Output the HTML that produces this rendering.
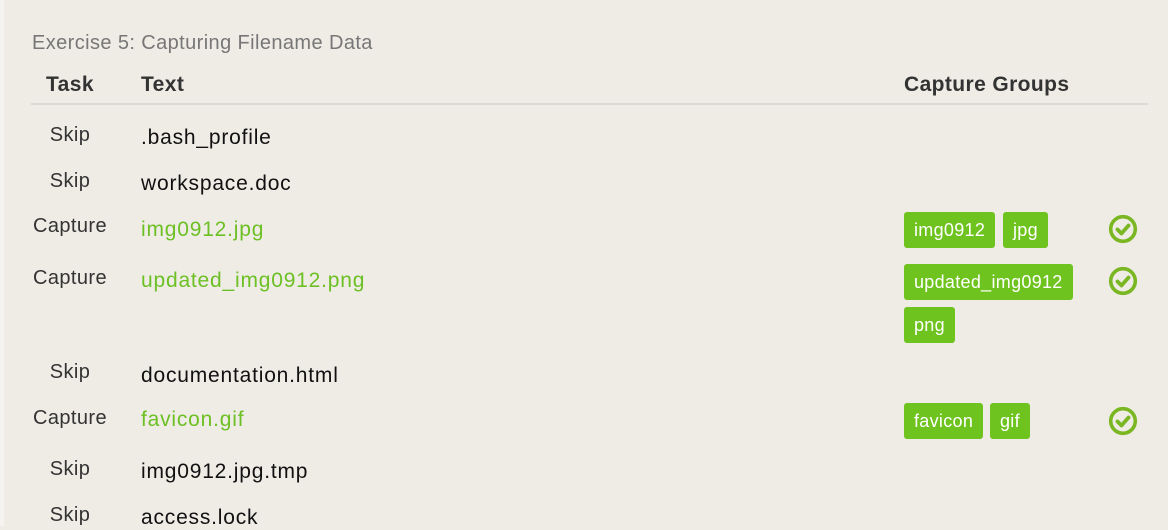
<!DOCTYPE html><html><head><style>
body{margin:0;width:1168px;height:526px;background:#efece6;font-family:"Liberation Sans",sans-serif;position:relative;overflow:hidden}
div,span{position:absolute;white-space:nowrap}
.t{font-size:21px;letter-spacing:0.8px;color:#111;line-height:24px;margin-top:2px}
.l{font-size:20px;letter-spacing:0.4px;color:#333;line-height:24px;width:100px;text-align:center;left:20px;margin-top:1px}
.g{color:#6cc024}
.h{font-weight:bold;font-size:21px;letter-spacing:0.4px;color:#333;line-height:24px;margin-top:1px}
.tag{background:#6fc31f;color:#fff;font-size:18px;letter-spacing:0.3px;height:36px;line-height:37px;border-radius:3px;padding:0 10px}
svg{position:absolute}
</style></head><body>
<div style="left:0;top:0;width:4px;height:526px;background:#f5f3ef"></div>
<div style="left:32px;top:31px;font-size:20px;letter-spacing:0.4px;color:#777;line-height:24px">Exercise 5: Capturing Filename Data</div>
<div class="h" style="left:46px;top:72px">Task</div>
<div class="h" style="left:141px;top:72px">Text</div>
<div class="h" style="left:904px;top:72px">Capture Groups</div>
<div style="left:31px;top:103px;width:1117px;height:2px;background:#dcdad6"></div>

<div class="l" style="top:122px">Skip</div><div class="t" style="left:141px;top:124px">.bash_profile</div>
<div class="l" style="top:168px">Skip</div><div class="t" style="left:141px;top:170px">workspace.doc</div>
<div class="l" style="top:213px">Capture</div><div class="t g" style="left:141px;top:216px">img0912.jpg</div>
<div class="l" style="top:265px">Capture</div><div class="t g" style="left:141px;top:267px">updated_img0912.png</div>
<div class="l" style="top:359px">Skip</div><div class="t" style="left:141px;top:362px">documentation.html</div>
<div class="l" style="top:405px">Capture</div><div class="t g" style="left:141px;top:406px">favicon.gif</div>
<div class="l" style="top:456px">Skip</div><div class="t" style="left:141px;top:458px">img0912.jpg.tmp</div>
<div class="l" style="top:502px">Skip</div><div class="t" style="left:141px;top:504px">access.lock</div>

<div class="tag" style="left:904px;top:212px">img0912</div>
<div class="tag" style="left:1003px;top:212px">jpg</div>
<div class="tag" style="left:904px;top:264px">updated_img0912</div>
<div class="tag" style="left:904px;top:307px">png</div>
<div class="tag" style="left:904px;top:403px">favicon</div>
<div class="tag" style="left:990px;top:403px">gif</div>

<svg style="left:1108px;top:214px" width="30" height="30" viewBox="0 0 30 30"><circle cx="15" cy="15" r="12.3" fill="none" stroke="#7ab723" stroke-width="3.6"/><path d="M9.5 15.5l4 4 7-8" fill="none" stroke="#7ab723" stroke-width="3.8" stroke-linecap="round" stroke-linejoin="round"/></svg>
<svg style="left:1108px;top:266px" width="30" height="30" viewBox="0 0 30 30"><circle cx="15" cy="15" r="12.3" fill="none" stroke="#7ab723" stroke-width="3.6"/><path d="M9.5 15.5l4 4 7-8" fill="none" stroke="#7ab723" stroke-width="3.8" stroke-linecap="round" stroke-linejoin="round"/></svg>
<svg style="left:1108px;top:406px" width="30" height="30" viewBox="0 0 30 30"><circle cx="15" cy="15" r="12.3" fill="none" stroke="#7ab723" stroke-width="3.6"/><path d="M9.5 15.5l4 4 7-8" fill="none" stroke="#7ab723" stroke-width="3.8" stroke-linecap="round" stroke-linejoin="round"/></svg>
</body></html>
